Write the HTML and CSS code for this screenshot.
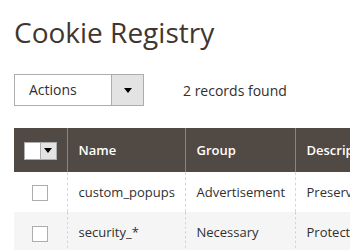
FILE: index.html
```html
<!DOCTYPE html>
<html lang="en">
<head>
  <meta charset="UTF-8">
  <title>Cookie Registry</title>
  <meta name="viewport" content="width=device-width, initial-scale=1.0">
  <link rel="stylesheet" href="styles.css">
</head>
<body>
  <div class="page">
    <h1 class="page-title">Cookie Registry</h1>

    <div class="toolbar">
      <div class="action-select">
        <span class="action-label">Actions</span>
        <span class="action-toggle"><span class="arrow"></span></span>
      </div>
      <span class="records">2 records found</span>
    </div>

    <table class="grid">
      <colgroup>
        <col class="col-check">
        <col class="col-name">
        <col class="col-group">
        <col class="col-desc">
      </colgroup>
      <thead>
        <tr>
          <th class="check-cell">
            <div class="multi-check">
              <span class="multi-box"></span>
              <span class="multi-toggle"><span class="arrow"></span></span>
            </div>
          </th>
          <th>Name</th>
          <th>Group</th>
          <th>Description</th>
        </tr>
      </thead>
      <tbody>
        <tr>
          <td class="check-cell"><span class="checkbox"></span></td>
          <td>custom_popups</td>
          <td>Advertisement</td>
          <td>Preserves popup state</td>
        </tr>
        <tr class="even">
          <td class="check-cell"><span class="checkbox"></span></td>
          <td>security_*</td>
          <td>Necessary</td>
          <td>Protects the session</td>
        </tr>
      </tbody>
    </table>
  </div>
</body>
</html>
```

FILE: styles.css
```css
body {
  margin: 0;
  background: #fff;
  color: #303030;
  font-family: 'Open Sans', sans-serif;
  font-size: 14px;
  overflow: hidden;
}

.page {
  padding: 14px 0 0 14px;
}

.page-title {
  margin: 0;
  font-size: 28px;
  line-height: 36px;
  font-weight: 400;
  color: #41362f;
}

/* toolbar */
.toolbar {
  display: flex;
  align-items: center;
  margin-top: 24px;
  height: 32px;
}

.action-select {
  display: flex;
  width: 130px;
  height: 32px;
  box-sizing: border-box;
  border: 1px solid #adadad;
}

.action-label {
  flex: 1;
  padding-left: 14px;
  line-height: 30px;
  color: #303030;
}

.action-toggle {
  width: 31px;
  background: #e3e3e3;
  border-left: 1px solid #adadad;
  display: flex;
  align-items: center;
  justify-content: center;
}

.arrow {
  width: 0;
  height: 0;
  border-left: 4px solid transparent;
  border-right: 4px solid transparent;
  border-top: 5px solid #000;
}

.records {
  margin-left: 39px;
  color: #303030;
}

/* grid */
.grid {
  margin-top: 22px;
  border-collapse: collapse;
  table-layout: fixed;
  width: 481px;
  font-size: 13px;
}

.col-check { width: 53px; }
.col-name { width: 118px; }
.col-group { width: 110px; }
.col-desc { width: 200px; }

.grid th {
  background: #514943;
  color: #fff;
  font-weight: 600;
  text-align: left;
  padding: 12px 11px;
  line-height: 18px;
  white-space: nowrap;
  overflow: hidden;
  border-left: 1px solid #8a837f;
  border-right: 1px solid #8a837f;
}

.grid th:first-child {
  border-left: 0;
}

.grid td {
  padding: 11px 11px 11px;
  line-height: 18px;
  white-space: nowrap;
  overflow: hidden;
  color: #303030;
  border-left: 1px dashed #d6d6d6;
  border-right: 1px dashed #d6d6d6;
}

.grid td:first-child {
  border-left: 0;
}

.grid tr.even td {
  background: #f5f5f5;
}

.grid .check-cell {
  text-align: center;
  padding-left: 0;
  padding-right: 0;
}

.multi-check {
  display: inline-flex;
  vertical-align: middle;
  height: 16px;
  border: 1px solid #adadad;
}

.multi-box {
  width: 15px;
  background: #fff;
}

.multi-toggle {
  width: 15px;
  background: #e3e3e3;
  border-left: 1px solid #adadad;
  display: flex;
  align-items: center;
  justify-content: center;
}

.checkbox {
  display: inline-block;
  vertical-align: middle;
  width: 14px;
  height: 14px;
  border: 1px solid #adadad;
  background: #fff;
}
```
